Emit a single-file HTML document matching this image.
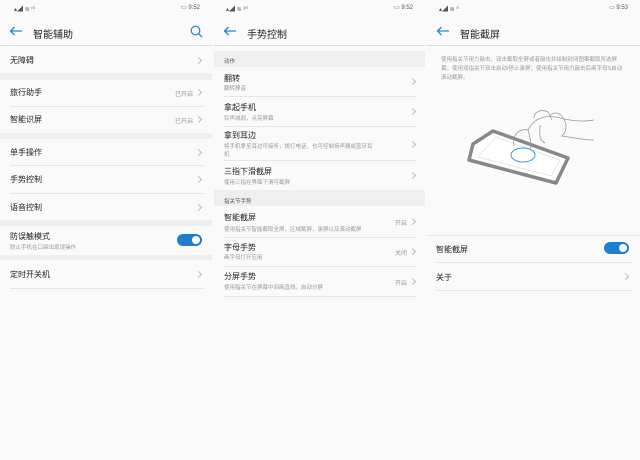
<!DOCTYPE html>
<html><head><meta charset="utf-8"><style>
*{margin:0;padding:0;box-sizing:border-box}
body{width:640px;height:460px;background:#fafafa;font-family:"Liberation Sans","Noto Sans CJK SC",sans-serif;position:relative;overflow:hidden;color:#222}
.p{position:absolute;top:0;height:460px;background:#fafafa}
.a{position:absolute;white-space:nowrap}
.t{font-size:8px;color:#222}
.s{font-size:5.5px;color:#999}
.r{font-size:6px;color:#999}
.band{position:absolute;left:0;right:0;background:#efefef}
.ln{position:absolute;height:1px;background:#e6e6e6}
.ch{position:absolute;width:5px;height:5px;border-top:1px solid #bbb;border-right:1px solid #bbb;transform:rotate(45deg)}
.tg{position:absolute;width:25px;height:12px;border-radius:6px;background:#1e7fd0}
.tg:after{content:"";position:absolute;right:2px;top:2px;width:8px;height:8px;border-radius:50%;background:#fff}
.sb{position:absolute;top:4px;font-size:6px;color:#555}
.hd{position:absolute;top:26px;font-size:10px;color:#222}
.bk{position:absolute;top:26px;width:14px;height:10px}
</style></head><body>
<!-- Panel 1 -->
<div class="p" style="left:0;width:212px">
<div class="sb" style="left:14px">▴◢ ≋ ⁱ⁰</div><div class="sb" style="right:12px">▭ 9:52</div>
<svg class="bk" style="left:9px" viewBox="0 0 14 10"><path d="M13 5H1.5M5.5 1L1.5 5l4 4" stroke="#2a86c8" stroke-width="1.3" fill="none"/></svg>
<div class="hd" style="left:33px">智能辅助</div>
<svg class="a" style="left:190px;top:25px" width="13" height="13" viewBox="0 0 13 13"><circle cx="5.5" cy="5.5" r="4.3" stroke="#2a86c8" stroke-width="1.2" fill="none"/><path d="M8.7 8.7L12 12" stroke="#2a86c8" stroke-width="1.3"/></svg>
<div class="ln" style="left:0;right:0;top:45px;background:#ddd"></div>
<div class="a t" style="left:10px;top:55px">无障碍</div><div class="ch" style="left:196px;top:58px"></div>
<div class="band" style="top:73px;height:7px"></div>
<div class="a t" style="left:10px;top:87px">旅行助手</div><div class="a r" style="left:175px;top:89px">已开启</div><div class="ch" style="left:196px;top:90px"></div>
<div class="ln" style="left:10px;right:8px;top:106px"></div>
<div class="a t" style="left:10px;top:114px">智能识屏</div><div class="a r" style="left:175px;top:116px">已开启</div><div class="ch" style="left:196px;top:117px"></div>
<div class="band" style="top:133px;height:6px"></div>
<div class="a t" style="left:10px;top:147px">单手操作</div><div class="ch" style="left:196px;top:150px"></div>
<div class="ln" style="left:10px;right:8px;top:165px"></div>
<div class="a t" style="left:10px;top:174px">手势控制</div><div class="ch" style="left:196px;top:177px"></div>
<div class="ln" style="left:10px;right:8px;top:193px"></div>
<div class="a t" style="left:10px;top:202px">语音控制</div><div class="ch" style="left:196px;top:205px"></div>
<div class="band" style="top:220px;height:6px"></div>
<div class="a t" style="left:10px;top:231px">防误触模式</div><div class="a s" style="left:10px;top:243px">防止手机在口袋出现误操作</div>
<div class="tg" style="left:177px;top:234px"></div>
<div class="band" style="top:255px;height:5px"></div>
<div class="a t" style="left:10px;top:269px">定时开关机</div><div class="ch" style="left:196px;top:272px"></div>
<div class="ln" style="left:10px;right:8px;top:288px"></div>
</div>
<!-- Panel 2 -->
<div class="p" style="left:214px;width:211px">
<div class="sb" style="left:12px">▴◢ ≋ ²⁰</div><div class="sb" style="right:12px">▭ 9:52</div>
<svg class="bk" style="left:9px" viewBox="0 0 14 10"><path d="M13 5H1.5M5.5 1L1.5 5l4 4" stroke="#2a86c8" stroke-width="1.3" fill="none"/></svg>
<div class="hd" style="left:33px">手势控制</div>
<div class="ln" style="left:0;right:0;top:45px;background:#ddd"></div>
<div class="band" style="top:51px;height:16px"></div>
<div class="a s" style="left:10px;top:57px;color:#555">动作</div>
<div class="a t" style="left:10px;top:73px">翻转</div><div class="a s" style="left:10px;top:84px">翻转静音</div><div class="ch" style="left:196px;top:79px"></div>
<div class="ln" style="left:10px;right:8px;top:96px"></div>
<div class="a t" style="left:10px;top:102px">拿起手机</div><div class="a s" style="left:10px;top:114px">铃声减弱，点亮屏幕</div><div class="ch" style="left:196px;top:109px"></div>
<div class="ln" style="left:10px;right:8px;top:126px"></div>
<div class="a t" style="left:10px;top:130px">拿到耳边</div><div class="a s" style="left:10px;top:142px">将手机拿至耳边可接听，拨打电话，也可控制扬声器或蓝牙耳</div><div class="a s" style="left:10px;top:150px">机</div><div class="ch" style="left:196px;top:142px"></div>
<div class="ln" style="left:10px;right:8px;top:160px"></div>
<div class="a t" style="left:10px;top:166px">三指下滑截屏</div><div class="a s" style="left:10px;top:178px">使用三指在界面下滑可截屏</div><div class="ch" style="left:196px;top:173px"></div>
<div class="band" style="top:190px;height:16px"></div>
<div class="a s" style="left:10px;top:197px;color:#555">指关节手势</div>
<div class="a t" style="left:10px;top:212px">智能截屏</div><div class="a s" style="left:10px;top:225px">使用指关节智能截取全屏，区域截屏，录屏以及滚动截屏</div><div class="a r" style="left:181px;top:218px">开启</div><div class="ch" style="left:196px;top:219px"></div>
<div class="ln" style="left:10px;right:8px;top:237px"></div>
<div class="a t" style="left:10px;top:242px">字母手势</div><div class="a s" style="left:10px;top:253px">画字母打开应用</div><div class="a r" style="left:181px;top:248px">关闭</div><div class="ch" style="left:196px;top:249px"></div>
<div class="ln" style="left:10px;right:8px;top:266px"></div>
<div class="a t" style="left:10px;top:271px">分屏手势</div><div class="a s" style="left:10px;top:283px">使用指关节在屏幕中间画直线，启动分屏</div><div class="a r" style="left:181px;top:278px">开启</div><div class="ch" style="left:196px;top:279px"></div>
<div class="ln" style="left:10px;right:8px;top:296px"></div>
</div>
<!-- Panel 3 -->
<div class="p" style="left:427px;width:213px">
<div class="sb" style="left:12px">▴◢ ≋ ⁰</div><div class="sb" style="right:12px">▭ 9:53</div>
<svg class="bk" style="left:9px" viewBox="0 0 14 10"><path d="M13 5H1.5M5.5 1L1.5 5l4 4" stroke="#2a86c8" stroke-width="1.3" fill="none"/></svg>
<div class="hd" style="left:33px">智能截屏</div>
<div class="ln" style="left:0;right:0;top:45px;background:#ddd"></div>
<div class="a s" style="left:14px;top:56px;line-height:9px;white-space:normal;width:186px">使用指关节用力敲击，双击截取全屏或者敲击并绘制封闭图案截取所选屏幕；使用双指关节双击启动/停止录屏；使用指关节用力敲击后画字母S启动滚动截屏。</div>
<svg class="a" style="left:0;top:0" width="213" height="460" viewBox="427 0 213 460">
<path d="M493 131L568 158L556 183L469 160L473 144Z" fill="#fff" stroke="#888" stroke-width="3.5" stroke-linejoin="round"/>
<path d="M496 137L560 160L551 176L478 157Z" fill="#fff" stroke="#ccc" stroke-width="0.5"/>
<ellipse cx="523" cy="155" rx="12" ry="7" fill="none" stroke="#3a9bd0" stroke-width="1"/>
<path d="M514 146C512 136 518 128 528 130C534 118 546 114 560 118C572 121 585 122 594 120M534 118C534 111 542 109 548 112L552 120M549 117C553 111 560 112 563 118C568 124 566 133 562 136C575 138 585 140 594 140M528 130C530 138 532 144 530 150M540 125C540 132 538 140 545 143" fill="none" stroke="#999" stroke-width="0.8"/>
</svg>
<div class="ln" style="left:0;right:0;top:235px"></div>
<div class="a t" style="left:9px;top:244px">智能截屏</div><div class="tg" style="left:177px;top:242px"></div>
<div class="ln" style="left:9px;right:8px;top:262px"></div>
<div class="a t" style="left:9px;top:272px">关于</div><div class="ch" style="left:196px;top:274px"></div>
<div class="ln" style="left:9px;right:8px;top:290px"></div>
</div>
</body></html>
